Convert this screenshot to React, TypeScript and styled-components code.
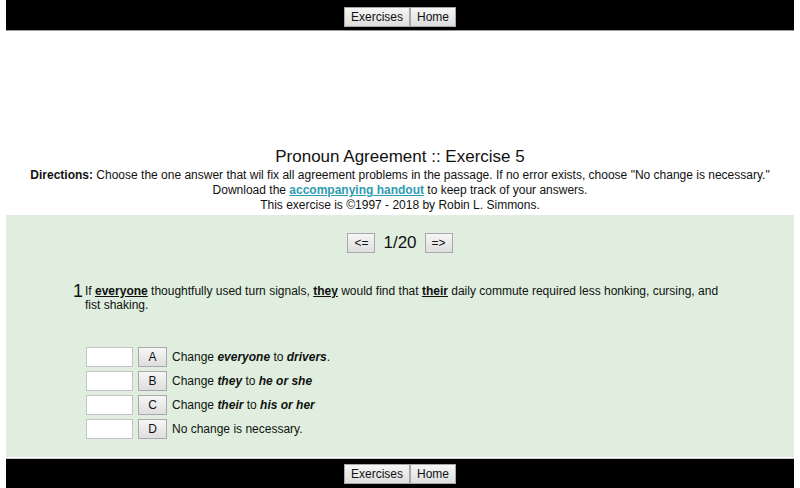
import React from 'react';
import styled, { createGlobalStyle } from 'styled-components';

const GlobalStyle = createGlobalStyle`
  html, body {
    margin: 0;
    padding: 0;
    background: #ffffff;
    font-family: 'Liberation Sans', Arial, sans-serif;
    color: #111;
  }
`;

const Page = styled.div`
  padding: 0 6px;
`;

const NavBar = styled.div<{ $bottom?: boolean }>`
  background: #000;
  height: 31px;
  box-sizing: border-box;
  padding-top: ${(p) => (p.$bottom ? '5px' : '7px')};
  display: flex;
  align-items: flex-start;
  justify-content: center;
  border-bottom: ${(p) => (p.$bottom ? 'none' : '1px solid #9a9a9a')};
  border-top: ${(p) => (p.$bottom ? '1px solid #c8c8c8' : 'none')};
  margin-top: ${(p) => (p.$bottom ? '1px' : '0')};
`;

const GrayButton = styled.button<{ $w?: number }>`
  font-family: 'Liberation Sans', Arial, sans-serif;
  font-size: 12px;
  line-height: 14px;
  padding: 2px 6px;
  height: 20px;
  ${(p) => (p.$w ? `width: ${p.$w}px;` : '')}
  color: #111;
  background: linear-gradient(#f6f6f6, #dedede);
  border: 1px solid #a8a8a8;
  border-radius: 0;
  margin: 0;
  cursor: pointer;
`;

const AdSpace = styled.div`
  height: 115px;
`;

const Intro = styled.div`
  text-align: center;
  font-size: 12px;
  line-height: 15px;
  padding-bottom: 2px;
`;

const Title = styled.h1`
  font-size: 17px;
  font-weight: normal;
  line-height: 22px;
  margin: 0;
`;

const Line = styled.div``;

const Handout = styled.a`
  color: #2f9bb2;
  font-weight: bold;
  text-decoration: underline;
`;

const Exercise = styled.div`
  background: #dfeede;
  padding: 17px 0 18px;
`;

const Pager = styled.div`
  display: flex;
  align-items: center;
  justify-content: center;
  gap: 8px;
  height: 22px;
`;

const Count = styled.span`
  font-size: 17px;
  line-height: 22px;
`;

const Question = styled.div`
  width: 654px;
  margin: 29px auto 0;
  display: grid;
  grid-template-columns: 12px 1fr;
  font-size: 12px;
  line-height: 14px;
`;

const Number = styled.div`
  font-size: 18px;
  line-height: 16px;
`;

const Passage = styled.div`
  padding-top: 1px;
  u {
    font-weight: bold;
  }
`;

const Answers = styled.div`
  grid-column: 2;
  margin-top: 35px;
  padding-left: 1px;
  display: flex;
  flex-direction: column;
  gap: 4px;
`;

const AnswerRow = styled.div`
  display: flex;
  align-items: center;
  height: 20px;
  font-size: 12px;
`;

const AnswerBox = styled.input`
  width: 47px;
  height: 20px;
  box-sizing: border-box;
  border: 1px solid #c4c4c4;
  background: #fff;
  margin: 0 5px 0 0;
  padding: 0;
`;

const AnswerText = styled.span`
  margin-left: 5px;
  b {
    font-style: italic;
  }
`;

const answers = [
  { letter: 'A', text: <>Change <b>everyone</b> to <b>drivers</b>.</> },
  { letter: 'B', text: <>Change <b>they</b> to <b>he or she</b></> },
  { letter: 'C', text: <>Change <b>their</b> to <b>his or her</b></> },
  { letter: 'D', text: <>No change is necessary.</> },
];

const Nav = ({ bottom }: { bottom?: boolean }) => (
  <NavBar $bottom={bottom}>
    <GrayButton>Exercises</GrayButton>
    <GrayButton>Home</GrayButton>
  </NavBar>
);

export default function App() {
  return (
    <Page>
      <GlobalStyle />
      <Nav />
      <AdSpace />
      <Intro>
        <Title>Pronoun Agreement :: Exercise 5</Title>
        <Line>
          <b>Directions:</b> Choose the one answer that wil fix all agreement problems in the passage. If no error
          exists, choose "No change is necessary."
        </Line>
        <Line>
          Download the <Handout href="#">accompanying handout</Handout> to keep track of your answers.
        </Line>
        <Line>This exercise is ©1997 - 2018 by Robin L. Simmons.</Line>
      </Intro>
      <Exercise>
        <Pager>
          <GrayButton $w={28}>&lt;=</GrayButton>
          <Count>1/20</Count>
          <GrayButton $w={28}>=&gt;</GrayButton>
        </Pager>
        <Question>
          <Number>1</Number>
          <Passage>
            If <u>everyone</u> thoughtfully used turn signals, <u>they</u> would find that <u>their</u> daily commute
            required less honking, cursing, and fist shaking.
          </Passage>
          <Answers>
            {answers.map((a) => (
              <AnswerRow key={a.letter}>
                <AnswerBox type="text" />
                <GrayButton $w={29}>{a.letter}</GrayButton>
                <AnswerText>{a.text}</AnswerText>
              </AnswerRow>
            ))}
          </Answers>
        </Question>
      </Exercise>
      <Nav bottom />
    </Page>
  );
}
